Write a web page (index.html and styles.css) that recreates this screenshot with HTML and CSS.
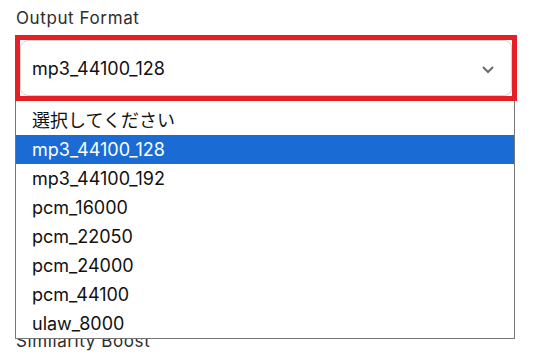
FILE: index.html
```html
<!DOCTYPE html>
<html lang="ja">
<head>
    <meta charset="UTF-8">
    <meta name="viewport" content="width=device-width, initial-scale=1.0">
    <title>Output Format</title>
    <link rel="stylesheet" href="styles.css">
</head>
<body>
    <div id="form">
        <div class="field">
            <label class="label">Output Format</label>
            <div class="highlight">
                <div class="select">
                    <span>mp3_44100_128</span>
                    <svg class="chevron" width="14" height="9" viewBox="0 0 14 9">
                        <path d="M2 2 L7 7 L12 2" fill="none" stroke="#6b6b6b" stroke-width="2"/>
                    </svg>
                </div>
            </div>
            <ul class="options">
                <li>選択してください</li>
                <li class="active">mp3_44100_128</li>
                <li>mp3_44100_192</li>
                <li>pcm_16000</li>
                <li>pcm_22050</li>
                <li>pcm_24000</li>
                <li>pcm_44100</li>
                <li>ulaw_8000</li>
            </ul>
        </div>
        <!-- the open dropdown covers the top of this label -->
        <div class="field next">
            <label class="label">Similarity Boost</label>
        </div>
    </div>
</body>
</html>
```

FILE: styles.css
```css
*{
    margin: 0;
    padding: 0;
    box-sizing: border-box;
}
body{
    background: #fff;
    font-family: Inter, "Noto Sans CJK JP", sans-serif;
    color: #111;
}
#form{
    padding: 6px 0 0 15px;
    width: 517px;
}
.field{
    position: relative;
}
.label{
    display: block;
    font-size: 17px;
    letter-spacing: 0.6px;
    line-height: 24px;
    color: #2d2d2d;
    padding-left: 1px;
    margin-bottom: 5px;
}
.highlight{
    border: 5px solid #e41f25;
    width: 502px;
    height: 66px;
}
.select{
    height: 100%;
    border: 1px solid #cfcfcf;
    border-radius: 8px;
    display: flex;
    align-items: center;
    justify-content: space-between;
    padding: 0 16px 0 11px;
    font-size: 18px;
}
.chevron{
    margin-top: 2px;
}
.options{
    list-style: none;
    position: absolute;
    left: 0;
    top: 95px;
    width: 500px;
    background: #fff;
    border: 1px solid #767676;
    border-top: none;
    padding-top: 5px;
    z-index: 2;
}
.options li{
    height: 29px;
    line-height: 29px;
    padding-left: 16px;
    font-size: 18px;
    color: #111;
}
.options .active{
    background: #1a6bd4;
    color: #fff;
}
.next{
    margin-top: 228px;
}
```
